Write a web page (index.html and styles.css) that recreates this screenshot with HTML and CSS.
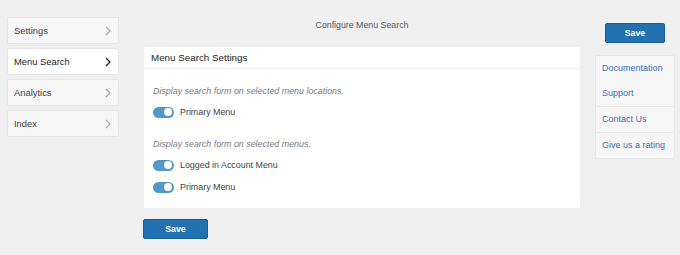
FILE: index.html
```html
<!DOCTYPE html>
<html lang="en">
<head>
  <meta charset="UTF-8">
  <meta name="viewport" content="width=device-width, initial-scale=1.0">
  <title>Configure Menu Search</title>
  <link rel="stylesheet" href="styles.css">
</head>
<body>
  <div class="layout">
    <ul class="nav">
      <li class="nav-item">Settings
        <svg class="chev" width="6" height="10" viewBox="0 0 6 10"><polyline points="1,1 5,5 1,9"/></svg>
      </li>
      <li class="nav-item active">Menu Search
        <svg class="chev" width="6" height="10" viewBox="0 0 6 10"><polyline points="1,1 5,5 1,9"/></svg>
      </li>
      <li class="nav-item">Analytics
        <svg class="chev" width="6" height="10" viewBox="0 0 6 10"><polyline points="1,1 5,5 1,9"/></svg>
      </li>
      <li class="nav-item">Index
        <svg class="chev" width="6" height="10" viewBox="0 0 6 10"><polyline points="1,1 5,5 1,9"/></svg>
      </li>
    </ul>

    <div class="main">
      <div class="page-title">Configure Menu Search</div>

      <div class="card">
        <div class="card-header">Menu Search Settings</div>
        <div class="card-body">
          <div class="group">
            <p class="desc">Display search form on selected menu locations.</p>
            <label class="row"><span class="toggle"></span>Primary Menu</label>
          </div>
          <div class="group">
            <p class="desc">Display search form on selected menus.</p>
            <label class="row"><span class="toggle"></span>Logged in Account Menu</label>
            <label class="row"><span class="toggle"></span>Primary Menu</label>
          </div>
        </div>
      </div>

      <button class="btn save-bottom">Save</button>
    </div>

    <div class="side">
      <button class="btn save-top">Save</button>
      <div class="links">
        <a href="#">Documentation</a>
        <a href="#">Support</a>
        <a href="#" class="sep">Contact Us</a>
        <a href="#" class="sep">Give us a rating</a>
      </div>
    </div>
  </div>
</body>
</html>
```

FILE: styles.css
```css
body {
  margin: 0;
  background-color: #f0f0f1;
  font-family: 'Liberation Sans', Arial, sans-serif;
  color: #3c434a;
}
.layout {
  display: flex;
  align-items: flex-start;
}
.nav {
  list-style: none;
  margin: 17px 0 0 7px;
  padding: 0;
  width: 112px;
}
.nav-item {
  display: flex;
  align-items: center;
  justify-content: space-between;
  box-sizing: border-box;
  height: 27px;
  margin-bottom: 4px;
  padding: 0 7px 0 6px;
  font-size: 9.4px;
  color: #3c434a;
  background-color: #f6f6f6;
  border: 1px solid #e6e6e6;
  border-radius: 2px;
}
.nav-item.active {
  background-color: #fff;
  color: #1d2327;
}
.chev polyline {
  fill: none;
  stroke: #a7aaad;
  stroke-width: 1.3;
}
.nav-item.active .chev polyline {
  stroke: #1d2327;
}
.main {
  width: 436px;
  margin-left: 25px;
}
.page-title {
  padding-top: 19px;
  line-height: 13px;
  font-size: 8.8px;
  text-align: center;
  color: #50575e;
}
.card {
  margin-top: 15px;
  background: #fff;
  border-radius: 2px;
}
.card-header {
  height: 21px;
  line-height: 21px;
  padding-left: 7px;
  font-size: 9.8px;
  color: #1d2327;
  border-bottom: 1px solid #f0f0f1;
}
.card-body {
  padding: 15px 9px 13px;
}
.group + .group {
  margin-top: 17px;
}
.desc {
  margin: 0;
  line-height: 14px;
  font-size: 8.9px;
  font-style: italic;
  color: #787c82;
}
.row {
  display: flex;
  align-items: center;
  height: 16px;
  margin-top: 6px;
  font-size: 8.9px;
  color: #3c434a;
}
.toggle {
  position: relative;
  width: 21px;
  height: 11px;
  margin-right: 6px;
  border-radius: 6px;
  background-color: #5299c7;
}
.toggle::after {
  content: '';
  position: absolute;
  top: 1.5px;
  right: 2px;
  width: 8px;
  height: 8px;
  border-radius: 50%;
  background: #fff;
}
.btn {
  display: block;
  box-sizing: border-box;
  height: 20px;
  padding: 0;
  font-family: inherit;
  font-size: 8.8px;
  font-weight: bold;
  color: #fff;
  background-color: #2271b1;
  border: 1px solid #135e96;
  border-radius: 2px;
}
.save-bottom {
  width: 65px;
  margin: 11px 0 0 -1px;
}
.side {
  width: 80px;
  margin-left: 15px;
}
.save-top {
  width: 60px;
  margin: 23px auto 0;
}
.links {
  margin-top: 12px;
  background-color: #f6f6f6;
  border: 1px solid #e8e8e8;
  border-radius: 2px;
}
.links a {
  display: block;
  line-height: 25px;
  padding-left: 6px;
  font-size: 9px;
  color: #3e6eb0;
  text-decoration: none;
}
.links a.sep {
  border-top: 1px solid #e8e8e8;
}
```
